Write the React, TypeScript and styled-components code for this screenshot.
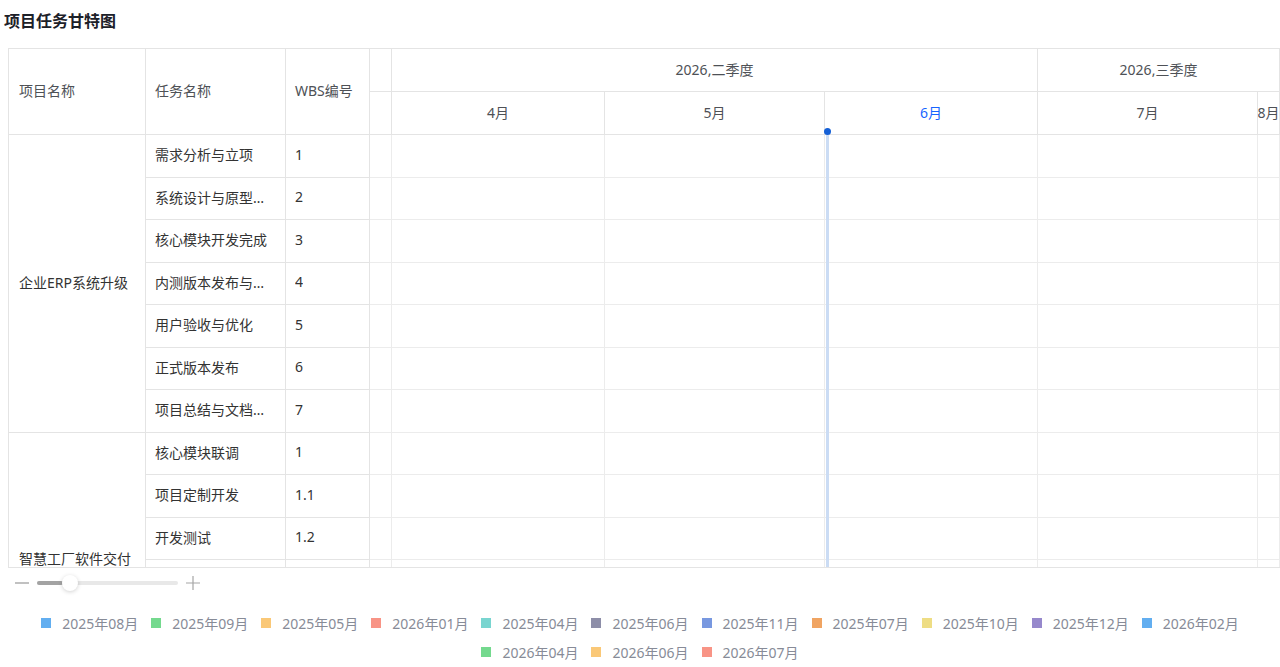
import React from "react";
import styled, { createGlobalStyle } from "styled-components";

const GlobalStyle = createGlobalStyle`
  body {
    margin: 0;
    background: #fff;
    font-family: "Noto Sans", "Noto Sans CJK SC", sans-serif;
  }
`;

const LINE = "#e4e4e4";
const GRID = "#ececec";
const ROW_H = 42.5;

type Task = { name: string; wbs: string };
type Project = { name: string; tasks: Task[] };

const projects: Project[] = [
  {
    name: "企业ERP系统升级",
    tasks: [
      { name: "需求分析与立项", wbs: "1" },
      { name: "系统设计与原型设计", wbs: "2" },
      { name: "核心模块开发完成", wbs: "3" },
      { name: "内测版本发布与测试", wbs: "4" },
      { name: "用户验收与优化", wbs: "5" },
      { name: "正式版本发布", wbs: "6" },
      { name: "项目总结与文档归档", wbs: "7" },
    ],
  },
  {
    name: "智慧工厂软件交付",
    tasks: [
      { name: "核心模块联调", wbs: "1" },
      { name: "项目定制开发", wbs: "1.1" },
      { name: "开发测试", wbs: "1.2" },
      { name: "现场部署", wbs: "1.3" },
      { name: "用户培训", wbs: "1.4" },
      { name: "项目验收", wbs: "2" },
    ],
  },
];

// visible months; the first is only the tail of March
const months = [
  { label: "", width: 22 },
  { label: "4月", width: 213 },
  { label: "5月", width: 220 },
  { label: "6月", width: 213, current: true },
  { label: "7月", width: 220 },
  { label: "8月", width: 0 },
];

const quarters = [
  { label: "", width: 22 },
  { label: "2026,二季度", width: 646 },
  { label: "2026,三季度", width: 0 },
];

const legend = [
  { label: "2025年08月", color: "#62aef0" },
  { label: "2025年09月", color: "#74d98e" },
  { label: "2025年05月", color: "#fac877" },
  { label: "2026年01月", color: "#f89486" },
  { label: "2025年04月", color: "#79d5d0" },
  { label: "2025年06月", color: "#8d8ea8" },
  { label: "2025年11月", color: "#7898e0" },
  { label: "2025年07月", color: "#f0a462" },
  { label: "2025年10月", color: "#eedd84" },
  { label: "2025年12月", color: "#9688cc" },
  { label: "2026年02月", color: "#62aef0" },
  { label: "2026年04月", color: "#74d98e" },
  { label: "2026年06月", color: "#fac877" },
  { label: "2026年07月", color: "#f89486" },
];

const Page = styled.div`
  width: 1280px;
  overflow: hidden;
`;

const Title = styled.h3`
  margin: 0;
  padding: 12px 4px 18px;
  font-size: 16px;
  line-height: 18px;
  font-weight: 700;
  color: #1d2129;
`;

const Frame = styled.div`
  margin-left: 8px;
  height: 520px;
  display: flex;
  border-top: 1px solid ${LINE};
  border-left: 1px solid ${LINE};
  border-bottom: 1px solid ${LINE};
  box-sizing: border-box;
  overflow: hidden;
`;

const LeftTable = styled.div`
  flex: none;
  width: 361px;
  display: grid;
  grid-template-columns: 137px 140px 84px;
  grid-template-rows: 86px;
  grid-auto-rows: ${ROW_H}px;
  align-content: start;
  font-size: 14px;
  color: #333;
`;

const Cell = styled.div<{ $col?: number; $head?: boolean }>`
  box-sizing: border-box;
  display: flex;
  align-items: center;
  padding: 0 9px 3px;
  min-width: 0;
  border-right: 1px solid ${LINE};
  border-bottom: 1px solid ${LINE};
  color: ${(p) => (p.$head ? "#4e5156" : "#333")};
  ${(p) => (p.$col ? `grid-column: ${p.$col};` : "padding-left: 10px;")}

  span {
    white-space: nowrap;
    overflow: hidden;
    text-overflow: ellipsis;
  }
`;

const Chart = styled.div`
  flex: 1;
  min-width: 0;
  position: relative;
  overflow: hidden;
  font-size: 14px;
`;

const HeadRow = styled.div`
  display: flex;
  height: 43px;
  box-sizing: border-box;
  border-bottom: 1px solid ${LINE};
`;

const HeadCell = styled.div<{ $w: number; $active?: boolean }>`
  box-sizing: border-box;
  ${(p) => (p.$w ? `flex: none; width: ${p.$w}px;` : "flex: 1; min-width: 0;")}
  display: flex;
  align-items: center;
  justify-content: center;
  padding-bottom: 2px;
  white-space: nowrap;
  overflow: hidden;
  border-right: 1px solid ${LINE};
  color: ${(p) => (p.$active ? "#1664ff" : "#4e5156")};
`;

const GridRow = styled.div`
  display: flex;
  height: ${ROW_H}px;
  box-sizing: border-box;
  border-bottom: 1px solid ${GRID};
`;

const GridCell = styled.div<{ $w: number }>`
  box-sizing: border-box;
  ${(p) => (p.$w ? `flex: none; width: ${p.$w}px;` : "flex: 1;")}
  border-right: 1px solid ${GRID};
`;

const TodayLine = styled.div`
  position: absolute;
  left: 456px;
  top: 82px;
  bottom: 0;
  width: 3px;
  background: #cbdcf4;
`;

const TodayDot = styled.div`
  position: absolute;
  left: 454px;
  top: 79px;
  width: 7px;
  height: 7px;
  border-radius: 50%;
  background: #1560d6;
`;

const ZoomBar = styled.div`
  height: 30px;
  display: flex;
  align-items: center;
  gap: 7px;
  padding-left: 14px;
`;

const Track = styled.div`
  position: relative;
  width: 141px;
  height: 4px;
  border-radius: 2px;
  background: #e8e8e8;
`;

const TrackFill = styled.div`
  position: absolute;
  left: 0;
  top: 0;
  height: 4px;
  border-radius: 2px;
  background: #a3a3a3;
`;

const Thumb = styled.div`
  position: absolute;
  top: -6px;
  width: 16px;
  height: 16px;
  border-radius: 50%;
  background: #fff;
  box-shadow: 0 1px 4px rgba(0, 0, 0, 0.18);
`;

const Legend = styled.div`
  display: flex;
  flex-wrap: wrap;
  justify-content: center;
  column-gap: 13px;
  padding-top: 10px;
`;

const LegendItem = styled.div`
  display: flex;
  align-items: center;
  gap: 11px;
  height: 29px;
  font-size: 14px;
  color: #878b97;
`;

const Swatch = styled.i<{ $c: string }>`
  width: 10px;
  height: 10px;
  background: ${(p) => p.$c};
`;

const totalRows = projects.reduce((n, p) => n + p.tasks.length, 0);

export default function App() {
  return (
    <Page>
      <GlobalStyle />
      <Title>项目任务甘特图</Title>
      <Frame>
        <LeftTable>
          <Cell $head>项目名称</Cell>
          <Cell $head $col={2}>任务名称</Cell>
          <Cell $head $col={3}>WBS编号</Cell>
          {projects.map((p) => (
            <React.Fragment key={p.name}>
              <Cell style={{ gridRow: `span ${p.tasks.length}` }}>
                <span>{p.name}</span>
              </Cell>
              {p.tasks.map((t, i) => (
                <React.Fragment key={i}>
                  <Cell $col={2}>
                    <span>{t.name}</span>
                  </Cell>
                  <Cell $col={3}>
                    <span>{t.wbs}</span>
                  </Cell>
                </React.Fragment>
              ))}
            </React.Fragment>
          ))}
        </LeftTable>
        <Chart>
          <HeadRow>
            {quarters.map((q, i) => (
              <HeadCell key={i} $w={q.width}>
                {q.label}
              </HeadCell>
            ))}
          </HeadRow>
          <HeadRow>
            {months.map((m, i) => (
              <HeadCell key={i} $w={m.width} $active={m.current}>
                {m.label}
              </HeadCell>
            ))}
          </HeadRow>
          {Array.from({ length: totalRows }).map((_, r) => (
            <GridRow key={r}>
              {months.map((m, i) => (
                <GridCell key={i} $w={m.width} />
              ))}
            </GridRow>
          ))}
          <TodayLine />
          <TodayDot />
        </Chart>
      </Frame>
      <ZoomBar>
        <svg width="16" height="16" viewBox="0 0 16 16">
          <path d="M1 8h14" stroke="#a6a6a6" strokeWidth="1.4" />
        </svg>
        <Track>
          <TrackFill style={{ width: 26 }} />
          <Thumb style={{ left: 25 }} />
        </Track>
        <svg width="16" height="16" viewBox="0 0 16 16">
          <path d="M1 8h14M8 1v14" stroke="#a6a6a6" strokeWidth="1.2" />
        </svg>
      </ZoomBar>
      <Legend>
        {legend.map((l) => (
          <LegendItem key={l.label}>
            <Swatch $c={l.color} />
            {l.label}
          </LegendItem>
        ))}
      </Legend>
    </Page>
  );
}
